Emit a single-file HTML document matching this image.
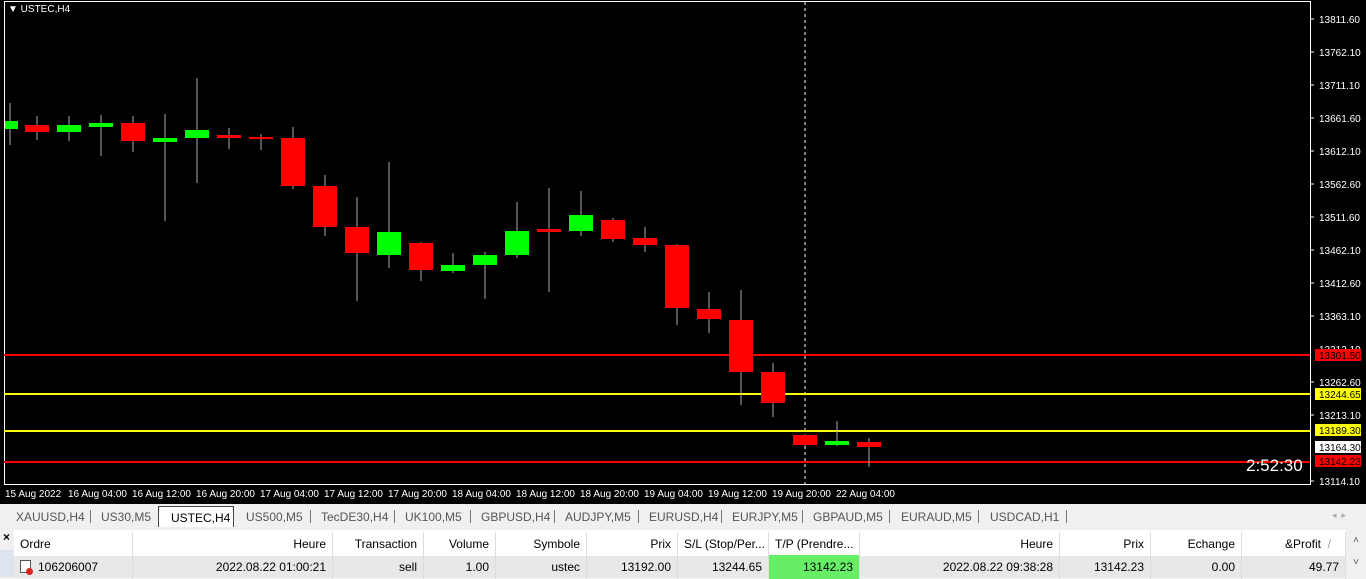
<!DOCTYPE html>
<html><head><meta charset="utf-8"><style>
*{margin:0;padding:0;box-sizing:border-box}
body{width:1366px;height:577px;overflow:hidden;background:#f0f0f0;font-family:"Liberation Sans",sans-serif;position:relative}
svg text{font-family:"Liberation Sans",sans-serif}
.tabs{position:absolute;left:0;top:504px;width:1366px;height:23px;background:#f0f0f0;font-size:12px;color:#555}
.tab{position:absolute;top:6px}
.sep{position:absolute;top:6px;width:1px;height:13px;background:#777}
.tbl{position:absolute;left:0;top:530px;width:1366px;height:47px;background:#fff;font-size:12px;color:#000}
.c{position:absolute;height:24px;line-height:24px;padding:0 6px;border-right:1px solid #ddd;white-space:nowrap}
</style></head><body>
<svg width="1366" height="504" style="position:absolute;left:0;top:0">
<rect width="1366" height="504" fill="#000"/>
<rect x="4.5" y="1.5" width="1306" height="483" fill="none" stroke="#fff"/>
<line x1="805" y1="2" x2="805" y2="484" stroke="#fff" stroke-dasharray="3,3"/>
<g font-size="10" fill="#fff">
<text x="8" y="12">▼ USTEC,H4</text>
</g>
<line x1="4" y1="355" x2="1310" y2="355" stroke="#f00" stroke-width="2"/>
<line x1="4" y1="394" x2="1310" y2="394" stroke="#ff0" stroke-width="2"/>
<line x1="4" y1="431" x2="1310" y2="431" stroke="#ff0" stroke-width="2"/>
<line x1="4" y1="462" x2="1310" y2="462" stroke="#f00" stroke-width="2"/>
<text x="1246" y="471" font-size="17" fill="#fff">2:52:30</text>
<g font-size="10" fill="#fff">
<text x="1319" y="23">13811.60</text><text x="1319" y="56">13762.10</text><text x="1319" y="89">13711.10</text><text x="1319" y="122">13661.60</text><text x="1319" y="155">13612.10</text><text x="1319" y="188">13562.60</text><text x="1319" y="221">13511.60</text><text x="1319" y="254">13462.10</text><text x="1319" y="287">13412.60</text><text x="1319" y="320">13363.10</text><text x="1319" y="353">13312.10</text><text x="1319" y="386">13262.60</text><text x="1319" y="419">13213.10</text><text x="1319" y="485">13114.10</text>
</g>
<rect x="1315" y="349" width="46" height="12" fill="#f00"/><text x="1319" y="359" font-size="10" fill="#000">13301.50</text>
<rect x="1315" y="388" width="46" height="12" fill="#ff0"/><text x="1319" y="398" font-size="10" fill="#000">13244.65</text>
<rect x="1315" y="424" width="46" height="12" fill="#ff0"/><text x="1319" y="434" font-size="10" fill="#000">13189.30</text>
<rect x="1315" y="441" width="46" height="12" fill="#fff"/><text x="1319" y="451" font-size="10" fill="#000">13164.30</text>
<rect x="1315" y="455" width="46" height="12" fill="#f00"/><text x="1319" y="465" font-size="10" fill="#000">13142.23</text>
<g font-size="10" fill="#fff">
<text x="5" y="497">15 Aug 2022</text><text x="68" y="497">16 Aug 04:00</text><text x="132" y="497">16 Aug 12:00</text><text x="196" y="497">16 Aug 20:00</text><text x="260" y="497">17 Aug 04:00</text><text x="324" y="497">17 Aug 12:00</text><text x="388" y="497">17 Aug 20:00</text><text x="452" y="497">18 Aug 04:00</text><text x="516" y="497">18 Aug 12:00</text><text x="580" y="497">18 Aug 20:00</text><text x="644" y="497">19 Aug 04:00</text><text x="708" y="497">19 Aug 12:00</text><text x="772" y="497">19 Aug 20:00</text><text x="836" y="497">22 Aug 04:00</text>
</g>
<g stroke="#fff">
<line x1="1310" y1="19" x2="1314" y2="19"/><line x1="1310" y1="52" x2="1314" y2="52"/><line x1="1310" y1="85" x2="1314" y2="85"/><line x1="1310" y1="118" x2="1314" y2="118"/><line x1="1310" y1="151" x2="1314" y2="151"/><line x1="1310" y1="184" x2="1314" y2="184"/><line x1="1310" y1="217" x2="1314" y2="217"/><line x1="1310" y1="250" x2="1314" y2="250"/><line x1="1310" y1="283" x2="1314" y2="283"/><line x1="1310" y1="316" x2="1314" y2="316"/><line x1="1310" y1="382" x2="1314" y2="382"/><line x1="1310" y1="415" x2="1314" y2="415"/><line x1="1310" y1="481" x2="1314" y2="481"/>
</g>
<g>
<g stroke="#aaa" stroke-width="1">
<line x1="10" y1="103" x2="10" y2="145"/><line x1="37" y1="116" x2="37" y2="140"/><line x1="69" y1="116" x2="69" y2="141"/><line x1="101" y1="115" x2="101" y2="156"/><line x1="133" y1="116" x2="133" y2="152"/><line x1="165" y1="114" x2="165" y2="221"/><line x1="197" y1="78" x2="197" y2="183"/><line x1="229" y1="128" x2="229" y2="149"/><line x1="261" y1="134" x2="261" y2="150"/><line x1="293" y1="127" x2="293" y2="189"/><line x1="325" y1="175" x2="325" y2="236"/><line x1="357" y1="197" x2="357" y2="301"/><line x1="389" y1="162" x2="389" y2="268"/><line x1="421" y1="242" x2="421" y2="281"/><line x1="453" y1="253" x2="453" y2="273"/><line x1="485" y1="252" x2="485" y2="299"/><line x1="517" y1="202" x2="517" y2="258"/><line x1="549" y1="188" x2="549" y2="292"/><line x1="581" y1="191" x2="581" y2="236"/><line x1="613" y1="218" x2="613" y2="242"/><line x1="645" y1="227" x2="645" y2="252"/><line x1="677" y1="244" x2="677" y2="325"/><line x1="709" y1="292" x2="709" y2="333"/><line x1="741" y1="290" x2="741" y2="405"/><line x1="773" y1="363" x2="773" y2="417"/><line x1="805" y1="434" x2="805" y2="446"/><line x1="837" y1="421" x2="837" y2="446"/><line x1="869" y1="438" x2="869" y2="467"/>
</g>
<g fill="#0f0"><rect x="5" y="121" width="13" height="8"/><rect x="57" y="125" width="24" height="7"/><rect x="89" y="123" width="24" height="4"/><rect x="153" y="138" width="24" height="4"/><rect x="185" y="130" width="24" height="8"/><rect x="377" y="232" width="24" height="23"/><rect x="441" y="265" width="24" height="6"/><rect x="473" y="255" width="24" height="10"/><rect x="505" y="231" width="24" height="24"/><rect x="569" y="215" width="24" height="16"/><rect x="825" y="441" width="24" height="4"/></g>
<g fill="#f00"><rect x="25" y="125" width="24" height="7"/><rect x="121" y="123" width="24" height="18"/><rect x="217" y="135" width="24" height="3"/><rect x="249" y="137" width="24" height="2"/><rect x="281" y="138" width="24" height="48"/><rect x="313" y="186" width="24" height="41"/><rect x="345" y="227" width="24" height="26"/><rect x="409" y="243" width="24" height="27"/><rect x="537" y="229" width="24" height="3"/><rect x="601" y="220" width="24" height="19"/><rect x="633" y="238" width="24" height="7"/><rect x="665" y="245" width="24" height="63"/><rect x="697" y="309" width="24" height="10"/><rect x="729" y="320" width="24" height="52"/><rect x="761" y="372" width="24" height="31"/><rect x="793" y="435" width="24" height="10"/><rect x="857" y="442" width="24" height="5"/></g>
</g>
</svg>
<div class="tabs">
<span class="tab" style="left:16px">XAUUSD,H4</span><span class="sep" style="left:90px"></span>
<span class="tab" style="left:101px">US30,M5</span>
<div style="position:absolute;left:158px;top:2px;width:76px;height:21px;background:#fff;border:1px solid #444;border-bottom:none;color:#000;padding:4px 0 0 12px">USTEC,H4</div>
<span class="tab" style="left:246px">US500,M5</span><span class="sep" style="left:310px"></span>
<span class="tab" style="left:321px">TecDE30,H4</span><span class="sep" style="left:394px"></span>
<span class="tab" style="left:405px">UK100,M5</span><span class="sep" style="left:470px"></span>
<span class="tab" style="left:481px">GBPUSD,H4</span><span class="sep" style="left:554px"></span>
<span class="tab" style="left:565px">AUDJPY,M5</span><span class="sep" style="left:638px"></span>
<span class="tab" style="left:649px">EURUSD,H4</span><span class="sep" style="left:721px"></span>
<span class="tab" style="left:732px">EURJPY,M5</span><span class="sep" style="left:802px"></span>
<span class="tab" style="left:813px">GBPAUD,M5</span><span class="sep" style="left:889px"></span>
<span class="tab" style="left:901px">EURAUD,M5</span><span class="sep" style="left:978px"></span>
<span class="tab" style="left:990px">USDCAD,H1</span><span class="sep" style="left:1066px"></span>
<span class="tab" style="left:1332px;color:#aaa;font-size:9px">◂ &nbsp;▸</span>
</div>
<div class="tbl">
<div style="position:absolute;left:0;top:0;width:14px;height:47px;background:#f0f0f0;font-size:12px;font-weight:bold;padding-left:3px">×</div>
<div style="position:absolute;left:0;top:20px;width:14px;height:27px;background:#dde4ee"></div>
<div style="position:absolute;left:14px;top:26px;width:1332px;height:21px;background:#e8e8e8"></div>
<div class="c" style="left:14px;top:2px;width:119px">Ordre</div>
<div class="c" style="left:133px;top:2px;width:200px;text-align:right">Heure</div>
<div class="c" style="left:333px;top:2px;width:91px;text-align:right">Transaction</div>
<div class="c" style="left:424px;top:2px;width:72px;text-align:right">Volume</div>
<div class="c" style="left:496px;top:2px;width:91px;text-align:right">Symbole</div>
<div class="c" style="left:587px;top:2px;width:91px;text-align:right">Prix</div>
<div class="c" style="left:678px;top:2px;width:91px;text-align:right">S/L (Stop/Per...</div>
<div class="c" style="left:769px;top:2px;width:91px;text-align:right">T/P (Prendre...</div>
<div class="c" style="left:860px;top:2px;width:200px;text-align:right">Heure</div>
<div class="c" style="left:1060px;top:2px;width:91px;text-align:right">Prix</div>
<div class="c" style="left:1151px;top:2px;width:91px;text-align:right">Echange</div>
<div class="c" style="left:1242px;top:2px;width:104px;text-align:right;padding-right:14px">&amp;Profit &nbsp;<span style="color:#999">/</span></div>
<div class="c" style="left:14px;top:25px;width:119px;padding-left:24px">106206007</div>
<div style="position:absolute;left:20px;top:30px;width:11px;height:13px;border:1px solid #555;background:#fff"></div>
<div style="position:absolute;left:26px;top:38px;width:7px;height:7px;border-radius:50%;background:#d22"></div>
<div class="c" style="left:133px;top:25px;width:200px;text-align:right">2022.08.22 01:00:21</div>
<div class="c" style="left:333px;top:25px;width:91px;text-align:right">sell</div>
<div class="c" style="left:424px;top:25px;width:72px;text-align:right">1.00</div>
<div class="c" style="left:496px;top:25px;width:91px;text-align:right">ustec</div>
<div class="c" style="left:587px;top:25px;width:91px;text-align:right">13192.00</div>
<div class="c" style="left:678px;top:25px;width:91px;text-align:right">13244.65</div>
<div class="c" style="left:769px;top:25px;width:91px;text-align:right;background:#66ee66">13142.23</div>
<div class="c" style="left:860px;top:25px;width:200px;text-align:right">2022.08.22 09:38:28</div>
<div class="c" style="left:1060px;top:25px;width:91px;text-align:right">13142.23</div>
<div class="c" style="left:1151px;top:25px;width:91px;text-align:right">0.00</div>
<div class="c" style="left:1242px;top:25px;width:104px;text-align:right">49.77</div>
<div style="position:absolute;left:1346px;top:0;width:20px;height:47px;background:#f0f0f0;font-size:10px;color:#555;text-align:center;line-height:22px">˄<br>˅</div>
</div>
</body></html>
